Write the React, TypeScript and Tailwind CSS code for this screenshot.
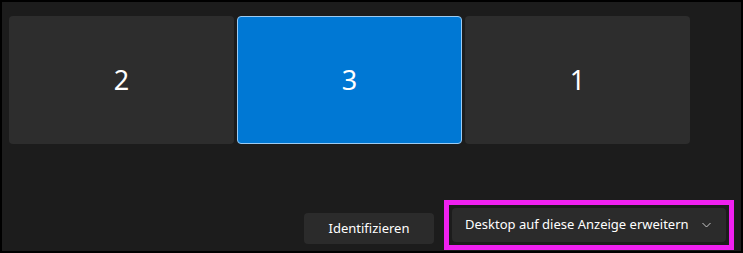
const tiles = [
  { id: "2", active: false },
  { id: "3", active: true },
  { id: "1", active: false },
];

const App = () => {
  return (
    <div className="h-[253px] w-[743px] bg-black p-[2px] font-['Noto_Sans','Segoe_UI',sans-serif]">
      <div className="flex h-full w-full flex-col bg-[#1c1c1c] pl-[7px] pr-[7px] pt-[14px] pb-[1px]">
        {/* monitor tiles */}
        <div className="flex gap-[3px]">
          {tiles.map((tile) => (
            <div
              key={tile.id}
              className={
                tile.active
                  ? "flex h-[128px] w-[225px] items-center justify-center rounded-[4px] border border-[#9ccbf2] bg-[#0078d4] text-[27px] text-white"
                  : "flex h-[128px] w-[225px] items-center justify-center rounded-[4px] bg-[#2d2d2d] text-[27px] text-white"
              }
            >
              {tile.id}
            </div>
          ))}
        </div>
        {/* actions */}
        <div className="mt-auto flex items-end justify-end gap-[10px]">
          <button className="mb-[6px] flex h-[31px] w-[130px] items-center justify-center rounded-[4px] bg-[#2b2b2b] text-[13px] text-white">
            Identifizieren
          </button>
          <div className="border-[5px] border-[#f020f0] p-[3px]">
            <div className="flex h-[34px] w-[274px] items-center justify-between rounded-[4px] bg-[#2b2b2b] pl-[13px] pr-[15px] text-[13px] text-white">
              <span>Desktop auf diese Anzeige erweitern</span>
              <svg width="9" height="6" viewBox="0 0 9 6" fill="none">
                <path d="M0.5 1L4.5 5L8.5 1" stroke="#c8c8c8" strokeWidth="1" />
              </svg>
            </div>
          </div>
        </div>
      </div>
    </div>
  );
};

export default App;
